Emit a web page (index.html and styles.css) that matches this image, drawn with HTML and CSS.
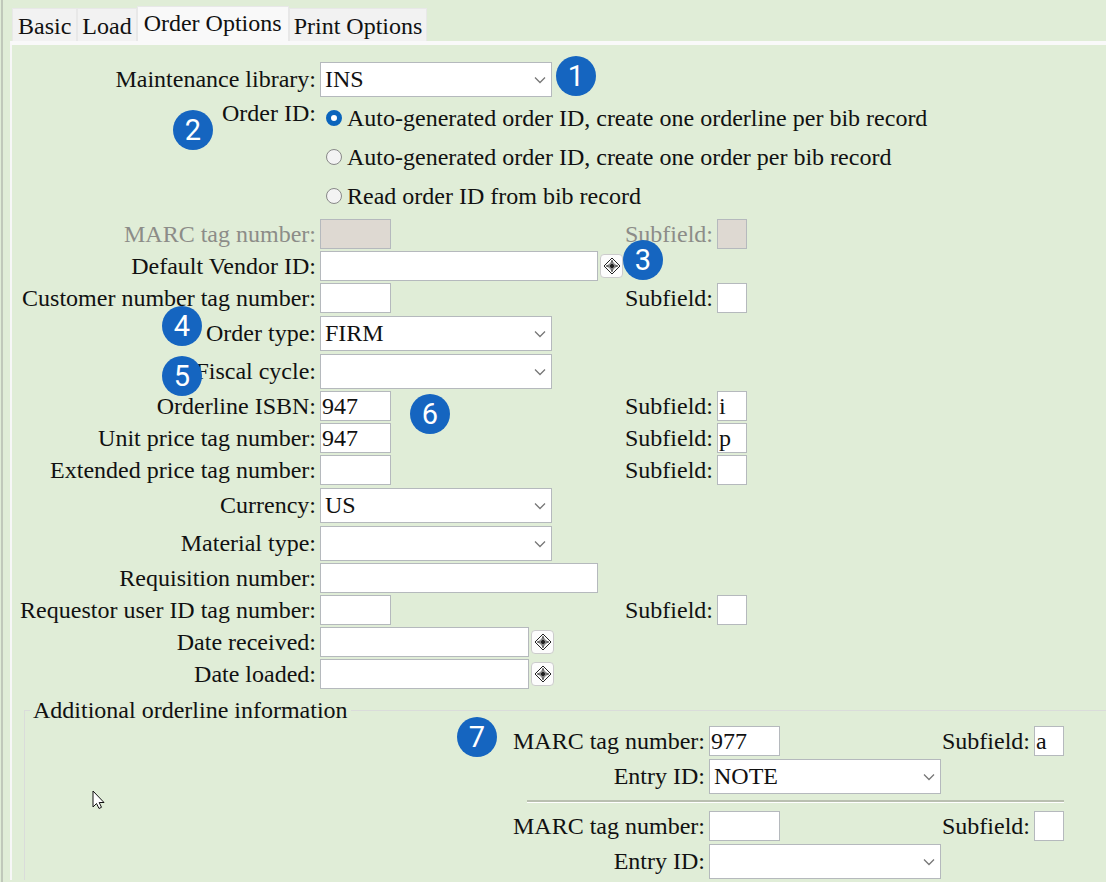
FILE: index.html
```html
<!DOCTYPE html>
<html lang="en">
<head>
    <meta charset="UTF-8">
    <meta name="viewport" content="width=device-width, initial-scale=1.0">
    <title>Order Options</title>
    <link rel="stylesheet" href="styles.css">
</head>
<body>
    <svg class="symbols" aria-hidden="true">
        <symbol id="chevron" viewBox="0 0 12 8">
            <path d="M1 1.5l5 5 5-5" fill="none" stroke="#777" stroke-width="1.3"/>
        </symbol>
        <symbol id="lookup" viewBox="0 0 18 18">
            <path d="M9 1l8 8-8 8-8-8z" fill="none" stroke="#222" stroke-width="1"/>
            <path d="M9 3v12M3 9h12" stroke="#222" stroke-width="1"/>
            <path d="M9 4l-2 3M9 4l2 3M9 14l-2-3M9 14l2-3M4 9l3-2M4 9l3 2M14 9l-3-2M14 9l-3 2" stroke="#555" stroke-width="0.8"/>
            <circle cx="9" cy="9" r="2.200" fill="#222"/>
        </symbol>
    </svg>
    <main class="window">
        <nav class="tabs">
            <button type="button">Basic</button>
            <button type="button">Load</button>
            <button type="button" class="active">Order Options</button>
            <button type="button">Print Options</button>
        </nav>
        <form class="panel">
            <div class="row tall">
                <label for="library">Maintenance library:</label>
                <div class="select">
                    <select id="library"><option>INS</option></select>
                    <svg><use href="#chevron"/></svg>
                </div>
            </div>
            <div class="row order-id" role="radiogroup" aria-labelledby="order-id">
                <span class="caption" id="order-id">Order ID:</span>
                <div class="radios">
                    <label><input type="radio" name="order-id" checked>Auto-generated order ID, create one orderline per bib record</label>
                    <label><input type="radio" name="order-id">Auto-generated order ID, create one order per bib record</label>
                    <label><input type="radio" name="order-id">Read order ID from bib record</label>
                </div>
            </div>
            <div class="row disabled">
                <label for="marc">MARC tag number:</label>
                <input type="text" class="tag" id="marc" disabled>
                <label for="marc-sub">Subfield:</label>
                <input type="text" class="sub" id="marc-sub" disabled>
            </div>
            <div class="row">
                <label for="vendor">Default Vendor ID:</label>
                <div class="lookup">
                    <input type="text" class="wide" id="vendor">
                    <button type="button" aria-label="Find vendor"><svg><use href="#lookup"/></svg></button>
                </div>
            </div>
            <div class="row">
                <label for="customer">Customer number tag number:</label>
                <input type="text" class="tag" id="customer">
                <label for="customer-sub">Subfield:</label>
                <input type="text" class="sub" id="customer-sub">
            </div>
            <div class="row tall">
                <label for="order-type">Order type:</label>
                <div class="select">
                    <select id="order-type"><option>FIRM</option></select>
                    <svg><use href="#chevron"/></svg>
                </div>
            </div>
            <div class="row tall">
                <label for="cycle">Fiscal cycle:</label>
                <div class="select">
                    <select id="cycle"><option></option></select>
                    <svg><use href="#chevron"/></svg>
                </div>
            </div>
            <div class="row">
                <label for="isbn">Orderline ISBN:</label>
                <input type="text" class="tag" id="isbn" value="947">
                <label for="isbn-sub">Subfield:</label>
                <input type="text" class="sub" id="isbn-sub" value="i">
            </div>
            <div class="row">
                <label for="unit">Unit price tag number:</label>
                <input type="text" class="tag" id="unit" value="947">
                <label for="unit-sub">Subfield:</label>
                <input type="text" class="sub" id="unit-sub" value="p">
            </div>
            <div class="row">
                <label for="extended">Extended price tag number:</label>
                <input type="text" class="tag" id="extended">
                <label for="extended-sub">Subfield:</label>
                <input type="text" class="sub" id="extended-sub">
            </div>
            <div class="row tall">
                <label for="currency">Currency:</label>
                <div class="select">
                    <select id="currency"><option>US</option></select>
                    <svg><use href="#chevron"/></svg>
                </div>
            </div>
            <div class="row tall">
                <label for="material">Material type:</label>
                <div class="select">
                    <select id="material"><option></option></select>
                    <svg><use href="#chevron"/></svg>
                </div>
            </div>
            <div class="row">
                <label for="requisition">Requisition number:</label>
                <input type="text" class="wide" id="requisition">
            </div>
            <div class="row">
                <label for="requestor">Requestor user ID tag number:</label>
                <input type="text" class="tag" id="requestor">
                <label for="requestor-sub">Subfield:</label>
                <input type="text" class="sub" id="requestor-sub">
            </div>
            <div class="row">
                <label for="received">Date received:</label>
                <div class="lookup">
                    <input type="text" class="date" id="received">
                    <button type="button" aria-label="Pick date received"><svg><use href="#lookup"/></svg></button>
                </div>
            </div>
            <div class="row">
                <label for="loaded">Date loaded:</label>
                <div class="lookup">
                    <input type="text" class="date" id="loaded">
                    <button type="button" aria-label="Pick date loaded"><svg><use href="#lookup"/></svg></button>
                </div>
            </div>

            <fieldset>
                <legend>Additional orderline information</legend>
                <div class="entries">
                    <div class="row">
                        <label for="entry1-tag">MARC tag number:</label>
                        <input type="text" class="tag" id="entry1-tag" value="977">
                        <label for="entry1-sub">Subfield:</label>
                        <input type="text" class="sub" id="entry1-sub" value="a">
                    </div>
                    <div class="row tall">
                        <label for="entry1-id">Entry ID:</label>
                        <div class="select">
                            <select id="entry1-id"><option>NOTE</option></select>
                            <svg><use href="#chevron"/></svg>
                        </div>
                    </div>
                    <hr>
                    <div class="row">
                        <label for="entry2-tag">MARC tag number:</label>
                        <input type="text" class="tag" id="entry2-tag">
                        <label for="entry2-sub">Subfield:</label>
                        <input type="text" class="sub" id="entry2-sub">
                    </div>
                    <div class="row tall">
                        <label for="entry2-id">Entry ID:</label>
                        <div class="select">
                            <select id="entry2-id"><option></option></select>
                            <svg><use href="#chevron"/></svg>
                        </div>
                    </div>
                </div>
            </fieldset>
        </form>

        <!-- numbered callouts over the form -->
        <span class="callout c1">1</span>
        <span class="callout c2">2</span>
        <span class="callout c3">3</span>
        <span class="callout c4">4</span>
        <span class="callout c5">5</span>
        <span class="callout c6">6</span>
        <span class="callout c7">7</span>
        <svg class="pointer" viewBox="0 0 13 20">
            <path d="M1 1v16l3.500-3.500L7 18.500l2.500-1.200-2.300-4.800h4.800z" fill="white" stroke="#111" stroke-width="1"/>
        </svg>
    </main>
</body>
</html>
```
FILE: styles.css
```css
* {
    box-sizing: border-box;
}
body {
    margin: 0;
    background: #e0edd7;
    color: #111;
    font-family: "Liberation Serif", serif;
    font-size: 24px;
    line-height: 30px;
    overflow: hidden;
}
input, select, button {
    font: inherit;
    color: inherit;
    margin: 0;
}
.symbols {
    display: none;
}
.window {
    position: relative;
    min-height: 100vh;
    margin-left: 1px;
    padding: 6px 0 0 7px;
    border-left: 2px solid #c0c8ba;
}

/* tabs */
.tabs {
    display: flex;
    align-items: flex-end;
    height: 35px;
    margin-left: 2px;
}
.tabs button {
    height: 33px;
    padding: 2px 5px 0;
    border: 1px solid #e8e8e8;
    border-bottom: 0;
    background: #f2f2f2;
    line-height: 30px;
    white-space: nowrap;
}
.tabs button + button {
    padding: 2px 4px 0;
}
.tabs button.active {
    height: 35px;
    padding: 0 6px 2px;
    background: #f9f9f9;
}

/* form */
.panel {
    border-top: 4px solid #f9f9f9;
    border-left: 2px solid #f7f7f7;
    padding-top: 15px;
}
.row {
    display: grid;
    grid-template-columns: 304px 304px 85px 30px;
    column-gap: 4px;
    align-items: center;
    height: 32px;
    white-space: nowrap;
}
.row.tall {
    height: 38px;
}
.row > label, .caption {
    justify-self: end;
}
.row.disabled {
    color: #8c8c88;
}
input[type="text"] {
    height: 30px;
    padding: 0 1px;
    border: 1px solid #b5b9bd;
    background: white;
}
input[type="text"]:disabled {
    background: #ded9d2;
}
input.tag {
    width: 71px;
}
input.sub {
    width: 30px;
}
input.wide {
    width: 278px;
}
input.date {
    width: 209px;
}
.select {
    position: relative;
    width: 232px;
    height: 35px;
}
.select select {
    appearance: none;
    width: 100%;
    height: 100%;
    padding: 0 24px 0 4px;
    border: 1px solid #b5b9bd;
    border-radius: 0;
    background: white;
}
.select svg {
    position: absolute;
    right: 6px;
    top: 14px;
    width: 12px;
    height: 8px;
    pointer-events: none;
}
.row.order-id {
    height: auto;
    align-items: start;
    padding-bottom: 3px;
}
.radios label {
    display: flex;
    align-items: center;
    gap: 5px;
    height: 39px;
    padding-left: 6px;
}
.radios input {
    appearance: none;
    flex: none;
    width: 16px;
    height: 16px;
    border: 1px solid #888;
    border-radius: 50%;
    background: #f3f3f3;
}
.radios input:checked {
    border: 5px solid #0a64bc;
    background: white;
}
.lookup {
    display: flex;
    align-items: center;
    gap: 2px;
}
.lookup button {
    display: flex;
    align-items: center;
    justify-content: center;
    flex: none;
    width: 23px;
    height: 24px;
    padding: 0;
    border: 1px solid #ccc;
    border-radius: 4px;
    background: #fcfcfc;
}
.lookup svg {
    width: 18px;
    height: 18px;
}

/* additional orderline information */
fieldset {
    min-width: 0;
    margin: 5px 0 0 12px;
    padding: 0 42px 0 0;
    border: 1px solid #dadcda;
    border-width: 1px 0 0 1px;
}
legend {
    margin-left: 5px;
    padding: 0 3px;
}
.entries {
    width: 540px;
    margin-left: auto;
}
.entries .row {
    grid-template-columns: 181px 232px 85px 30px;
    justify-content: end;
}
hr {
    height: 3px;
    margin: 5px 0 7px 3px;
    border: 0;
    border-top: 2px solid #b9bfb0;
    border-bottom: 1px solid white;
}

.callout {
    position: absolute;
    width: 40px;
    height: 40px;
    border-radius: 50%;
    background: #1565c0;
    color: white;
    font: 29px/40px Roboto, sans-serif;
    text-align: center;
}
.c1 { left: 553px; top: 56px; }
.c2 { left: 170px; top: 110px; }
.c3 { left: 620px; top: 240px; }
.c4 { left: 159px; top: 306px; }
.c5 { left: 159px; top: 356px; }
.c6 { left: 407px; top: 394px; }
.c7 { left: 454px; top: 717px; }
.pointer {
    position: absolute;
    left: 89px;
    top: 790px;
    width: 13px;
    height: 20px;
}
```
